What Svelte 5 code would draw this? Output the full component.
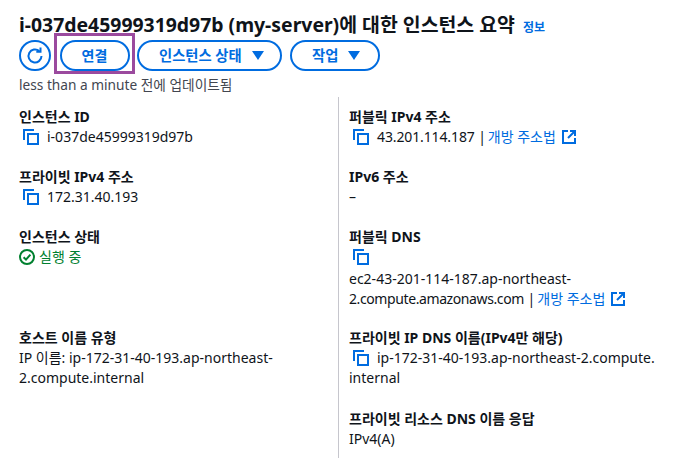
<script>
  const left = [
    { label: '인스턴스 ID', value: 'i-037de45999319d97b', copy: true, tall: false },
    { label: '프라이빗 IPv4 주소', value: '172.31.40.193', copy: true, tall: false },
    { label: '인스턴스 상태', status: '실행 중', tall: true },
    { label: '호스트 이름 유형', value: 'IP 이름: ip-172-31-40-193.ap-northeast-2.compute.internal', tall: false }
  ];
</script>

{#snippet copyIcon()}
  <svg class="copy" width="16" height="16" viewBox="0 0 16 16" fill="none" stroke="#006ce0" stroke-width="2">
    <path d="M1 11V1h10" stroke-linecap="butt" />
    <rect x="5" y="5" width="10" height="10" />
  </svg>
{/snippet}

{#snippet extIcon()}
  <svg class="ext" width="14" height="14" viewBox="0 0 14 14" fill="none" stroke="#006ce0" stroke-width="2">
    <path d="M6 1H1v12h12V8" />
    <path d="M8 1h5v5M13 1 6 8" />
  </svg>
{/snippet}

<main class="panel">
  <h1>i-037de45999319d97b (my-server)에 대한 인스턴스 요약 <a class="info" href="#top">정보</a></h1>
  <div class="actions">
    <button class="btn round" aria-label="새로 고침">
      <svg width="20" height="20" viewBox="0 0 20 20" fill="none" stroke="#006ce0" stroke-width="2">
        <path d="M16.5 10a6.5 6.5 0 1 1-2.2-4.9" />
        <path d="M15.5 1.5v4.2h-4.2" />
      </svg>
    </button>
    <div class="highlight"><button class="btn connect">연결</button></div>
    <button class="btn state"><span class="btn-label">인스턴스 상태</span><span class="tri"></span></button>
    <button class="btn work"><span class="btn-label">작업</span><span class="tri"></span></button>
  </div>
  <p class="updated">less than a minute 전에 업데이트됨</p>

  <div class="grid">
    <div class="col">
      {#each left as item}
        <div class="item" class:tall={item.tall}>
          <div class="label">{item.label}</div>
          {#if item.status}
            <div class="status">
              <svg width="16" height="16" viewBox="0 0 16 16" fill="none" stroke="#00802f" stroke-width="2">
                <circle cx="8" cy="8" r="7" />
                <path d="M4.6 8.2 7 10.6l4.4-5" />
              </svg>
              {item.status}
            </div>
          {:else if item.copy}
            <div class="value">{@render copyIcon()}<span class="text">{item.value}</span></div>
          {:else}
            <div class="plain">{item.value}</div>
          {/if}
        </div>
      {/each}
    </div>
    <div class="col right">
      <div class="item">
        <div class="label">퍼블릭 IPv4 주소</div>
        <div class="value">{@render copyIcon()}<span class="text"><span class="ip">43.201.114.187 |</span><a class="link-gap" href="#top">개방 주소법</a>{@render extIcon()}</span></div>
      </div>
      <div class="item">
        <div class="label">IPv6 주소</div>
        <div class="plain">–</div>
      </div>
      <div class="item tall">
        <div class="label">퍼블릭 DNS</div>
        <div class="value solo">{@render copyIcon()}</div>
        <div class="plain">ec2-43-201-114-187.ap-northeast-<wbr><span class="tight">2.compute.amazonaws.com</span> |<a class="link-gap" href="#top">개방 주소법</a>{@render extIcon()}</div>
      </div>
      <div class="item dns">
        <div class="label">프라이빗 IP DNS 이름(IPv4만 해당)</div>
        <div class="wrapped">{@render copyIcon()}ip-172-31-40-193.ap-northeast-2.compute.<wbr>internal</div>
      </div>
      <div class="item">
        <div class="label">프라이빗 리소스 DNS 이름 응답</div>
        <div class="plain">IPv4(A)</div>
      </div>
    </div>
  </div>
</main>

<style>
  :global(body) {
    margin: 0;
    background: #fff;
  }
  .panel {
    width: 678px;
    height: 458px;
    overflow: hidden;
    box-sizing: border-box;
    padding: 12px 0 0 19px;
    font-family: "Noto Sans", "Noto Sans CJK KR", sans-serif;
    font-size: 14px;
    line-height: 20px;
    color: #0f141a;
  }
  h1 {
    margin: 0;
    height: 26px;
    font-size: 19.4px;
    line-height: 26px;
    font-weight: 700;
    white-space: nowrap;
  }
  .info {
    margin-left: 3px;
    font-size: 12px;
    font-weight: 700;
    color: #006ce0;
    text-decoration: none;
  }
  a {
    color: #006ce0;
    text-decoration: none;
  }
  .actions {
    display: flex;
    align-items: center;
    margin-top: 2px;
    height: 31px;
  }
  .btn {
    height: 31px;
    box-sizing: border-box;
    background: #fff;
    border: 2px solid #006ce0;
    border-radius: 16px;
    color: #006ce0;
    font: inherit;
    font-weight: 700;
    padding: 0;
    display: flex;
    align-items: center;
    justify-content: center;
    white-space: nowrap;
  }
  .round { width: 32px; }
  .connect { width: 70px; }
  .highlight {
    flex: none;
    margin: 0 2px 4px 3px;
    box-sizing: border-box;
    width: 81px;
    height: 41px;
    border: 3px solid #9b4a9e;
    display: flex;
    align-items: flex-end;
    justify-content: center;
  }
  .state, .work {
    justify-content: flex-start;
    padding-left: 20px;
    gap: 10px;
  }
  .state { width: 145px; }
  .work { width: 90px; margin-left: 8px; }
  .btn-label { font-size: 14.3px; }
  .tri {
    width: 0;
    height: 0;
    border-left: 6.5px solid transparent;
    border-right: 6.5px solid transparent;
    border-top: 9px solid #006ce0;
  }
  .updated {
    margin: 6px 0 0;
    font-size: 13.7px;
    line-height: 16px;
    color: #424650;
  }
  .grid {
    display: flex;
    margin-top: 4px;
  }
  .col {
    width: 319px;
    padding-top: 10px;
    box-sizing: border-box;
  }
  .right {
    width: 340px;
    border-left: 1px solid #c6c6cd;
    padding-left: 10px;
    padding-right: 18px;
    height: 400px;
    flex: none;
  }
  .item { min-height: 60px; }
  .item.tall { min-height: 101px; }
  .item.dns { min-height: 81px; }
  .label { font-weight: 700; }
  .value {
    display: flex;
    align-items: center;
    padding-left: 4px;
  }
  .copy { flex: none; margin-right: 8px; }
  .solo { height: 22px; align-items: flex-start; }
  .solo .copy { margin-top: 2px; }
  .text { white-space: nowrap; }
  .ip { letter-spacing: -0.12px; }
  .link-gap { margin-left: 2px; }
  .tight { letter-spacing: -0.4px; }
  .wrapped .copy { vertical-align: -3px; margin-left: 4px; }
  .plain { color: #0f141a; }
  .ext { vertical-align: -2px; margin-left: 6px; }
  .status {
    display: flex;
    align-items: center;
    gap: 4px;
    color: #00802f;
  }
</style>
